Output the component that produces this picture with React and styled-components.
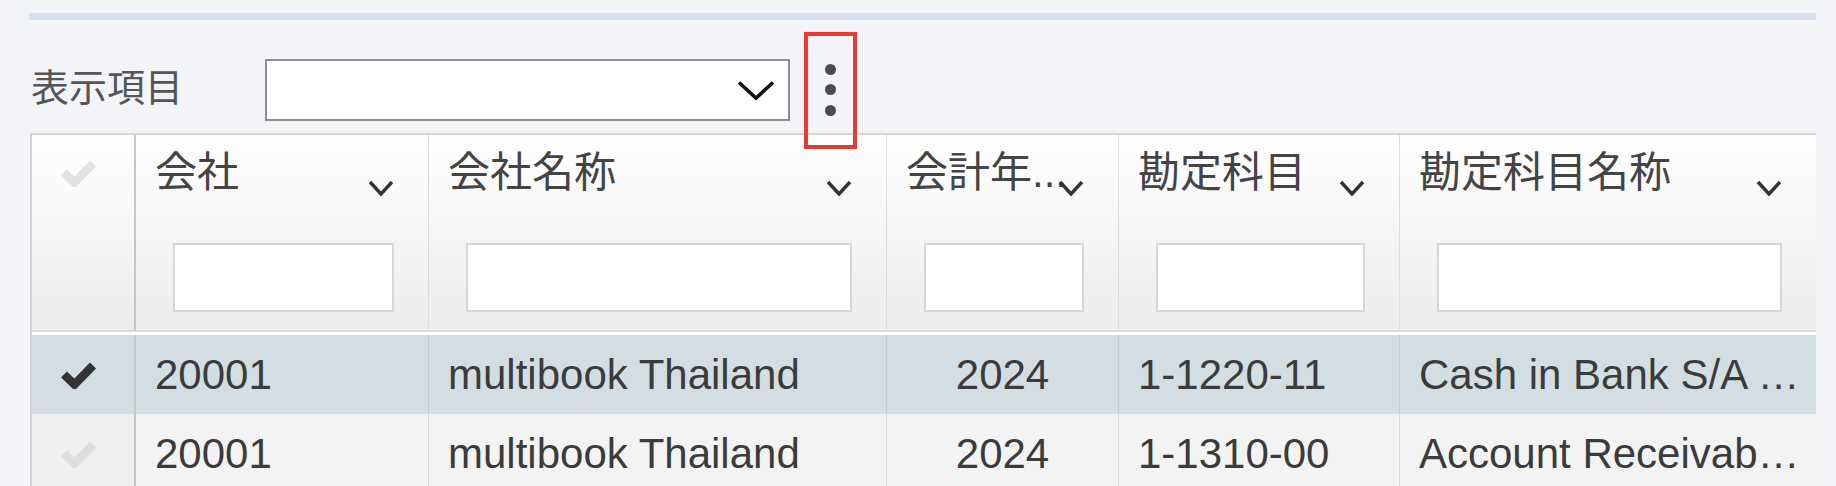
import React from 'react'
import styled, { createGlobalStyle } from 'styled-components'

const GlobalStyle = createGlobalStyle`
  html, body {
    margin: 0;
    padding: 0;
    background: #f3f4f8;
  }
  body {
    font-family: "Liberation Sans", "Noto Sans CJK JP", sans-serif;
  }
  * {
    box-sizing: border-box;
  }
`

// check col, 会社, 会社名称, 会計年度, 勘定科目, 勘定科目名称
const COLUMNS = '104px 293px 458px 232px 281px 416px'

const Page = styled.div`
  width: 1836px;
  height: 486px;
  overflow: hidden;
  padding: 13px 20px 0 30px;
`

const TopRule = styled.div`
  height: 7px;
  margin-left: -1px;
  background: #d4dff0;
`

const Toolbar = styled.div`
  position: relative;
  z-index: 2;
  display: flex;
  align-items: center;
  height: 62px;
  margin: 39px 0 12px;
`

const Label = styled.span`
  width: 235px;
  padding-left: 1px;
  margin-bottom: 4px;
  font-size: 38px;
  line-height: 38px;
  color: #555;
`

const Select = styled.div`
  display: flex;
  align-items: center;
  justify-content: flex-end;
  width: 525px;
  height: 62px;
  padding-right: 13px;
  background: #fff;
  border: 2px solid #8e8e8e;
`

const MenuButton = styled.button`
  position: relative;
  display: flex;
  flex-direction: column;
  align-items: center;
  justify-content: center;
  gap: 9.5px;
  width: 53px;
  height: 62px;
  margin-left: 14px;
  padding: 0 0 1px;
  border: 0;
  background: none;

  /* red callout frame around the column menu */
  &::after {
    content: '';
    position: absolute;
    left: 0;
    right: 0;
    top: -27px;
    bottom: -28px;
    border: 4px solid #e53b30;
  }
`

const Dot = styled.span`
  width: 11px;
  height: 11px;
  border-radius: 50%;
  background: #4b4b4b;
`

const Grid = styled.div`
  border-left: 2px solid #d2d2d2;
`

const HeaderRow = styled.div`
  display: grid;
  grid-template-columns: ${COLUMNS};
  border-top: 2px solid #d6d6d6;
  border-bottom: 2px solid #d9d9d9;
  background: linear-gradient(#ffffff, #ececec);
`

const CheckHead = styled.div`
  display: flex;
  justify-content: center;
  padding: 24px 9px 0 0;
  border-right: 2px solid #c6c6c6;
`

const HeaderCell = styled.div`
  display: flex;
  flex-direction: column;
  padding: 13px 34px 18px 19px;
  border-right: ${p => (p.$last ? '0' : '1px solid #dcdcdc')};
`

const TitleLine = styled.div`
  display: flex;
  align-items: flex-end;
  height: 50px;
`

const Title = styled.span`
  flex: 1;
  min-width: 0;
  overflow: hidden;
  white-space: nowrap;
  text-overflow: ellipsis;
  font-size: 42px;
  line-height: 50px;
  color: #444;
`

const HeadChevron = styled.svg`
  flex: none;
  margin: 0 0 1px -26px;
`

const FilterBox = styled.div`
  height: 69px;
  margin: 45px 0 0 18px;
  background: #fff;
  border: 2px solid #d6d6d6;
`

const Body = styled.div`
  border-top: 3px solid #fff;
`

const Row = styled.div`
  display: grid;
  grid-template-columns: ${COLUMNS};
  height: 79px;
  background: ${p => (p.$selected ? '#d3dee2' : '#f3f3f3')};
`

const CheckCell = styled.div`
  display: flex;
  align-items: center;
  justify-content: center;
  padding-right: 9px;
  border-right: 2px solid #c6c6c6;
  background: ${p => (p.$selected ? '#d3dee2' : '#efefef')};
`

const Cell = styled.div`
  padding: 0 ${p => (p.$last ? '12px' : '19px')} 0 19px;
  border-right: ${p => (p.$last ? '0' : `1px solid ${p.$selected ? '#c3cdd1' : '#dadada'}`)};
  overflow: hidden;
  white-space: nowrap;
  text-overflow: ellipsis;
  text-align: ${p => (p.$center ? 'center' : 'left')};
  font-size: 42px;
  line-height: 79px;
  color: #3b3b3b;
`

function CheckMark({ color }) {
  return (
    <svg width="37" height="28" viewBox="0 0 37 28">
      <polyline points="4,13.5 14.5,23.5 33,4.5" fill="none" stroke={color} strokeWidth="8.5" />
    </svg>
  )
}

function Chevron({ w, h, color, stroke }) {
  return (
    <HeadChevron width={w} height={h} viewBox={`0 0 ${w} ${h}`}>
      <polyline points={`2,2 ${w / 2},${h - 3} ${w - 2},2`} fill="none" stroke={color} strokeWidth={stroke} />
    </HeadChevron>
  )
}

const columns = [
  { title: '会社' },
  { title: '会社名称' },
  { title: '会計年...' },
  { title: '勘定科目' },
  { title: '勘定科目名称' },
]

const rows = [
  { selected: true, company: '20001', name: 'multibook Thailand', year: '2024', account: '1-1220-11', accountName: 'Cash in Bank S/A Bangkok Bank' },
  { selected: false, company: '20001', name: 'multibook Thailand', year: '2024', account: '1-1310-00', accountName: 'Account Receivable - Trade' },
]

export default function App() {
  return (
    <Page>
      <GlobalStyle />
      <TopRule />
      <Toolbar>
        <Label>表示項目</Label>
        <Select>
          <svg width="38" height="21" viewBox="0 0 38 21">
            <polyline points="2,2.5 19,18 36,2.5" fill="none" stroke="#111" strokeWidth="3.6" />
          </svg>
        </Select>
        <MenuButton aria-label="menu">
          <Dot />
          <Dot />
          <Dot />
        </MenuButton>
      </Toolbar>

      <Grid>
        <HeaderRow>
          <CheckHead>
            <CheckMark color="#e2e2e2" />
          </CheckHead>
          {columns.map((c, i) => (
            <HeaderCell key={c.title} $last={i === columns.length - 1}>
              <TitleLine>
                <Title>{c.title}</Title>
                <Chevron w={26} h={17} color="#333" stroke={3.4} />
              </TitleLine>
              <FilterBox />
            </HeaderCell>
          ))}
        </HeaderRow>

        <Body>
          {rows.map((r, i) => (
            <Row key={i} $selected={r.selected}>
              <CheckCell $selected={r.selected}>
                <CheckMark color={r.selected ? '#333' : '#dddddd'} />
              </CheckCell>
              <Cell $selected={r.selected}>{r.company}</Cell>
              <Cell $selected={r.selected}>{r.name}</Cell>
              <Cell $selected={r.selected} $center>{r.year}</Cell>
              <Cell $selected={r.selected}>{r.account}</Cell>
              <Cell $selected={r.selected} $last>{r.accountName}</Cell>
            </Row>
          ))}
        </Body>
      </Grid>
    </Page>
  )
}
